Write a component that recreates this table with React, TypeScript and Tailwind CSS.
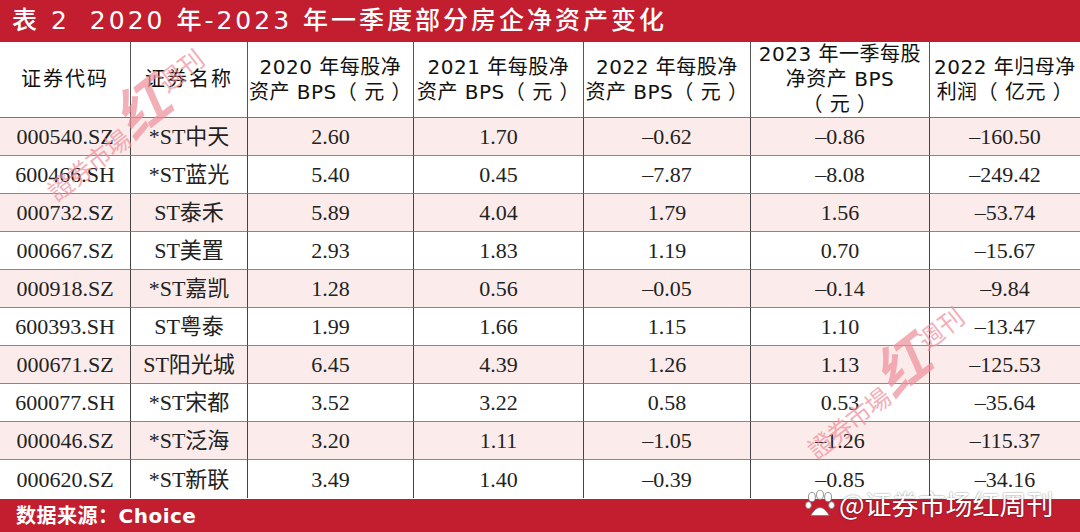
import React from 'react';

const ROWS = [
  ['000540.SZ', '*ST中天', '2.60', '1.70', '–0.62', '–0.86', '–160.50'],
  ['600466.SH', '*ST蓝光', '5.40', '0.45', '–7.87', '–8.08', '–249.42'],
  ['000732.SZ', 'ST泰禾', '5.89', '4.04', '1.79', '1.56', '–53.74'],
  ['000667.SZ', 'ST美置', '2.93', '1.83', '1.19', '0.70', '–15.67'],
  ['000918.SZ', '*ST嘉凯', '1.28', '0.56', '–0.05', '–0.14', '–9.84'],
  ['600393.SH', 'ST粤泰', '1.99', '1.66', '1.15', '1.10', '–13.47'],
  ['000671.SZ', 'ST阳光城', '6.45', '4.39', '1.26', '1.13', '–125.53'],
  ['600077.SH', '*ST宋都', '3.52', '3.22', '0.58', '0.53', '–35.64'],
  ['000046.SZ', '*ST泛海', '3.20', '1.11', '–1.05', '–1.26', '–115.37'],
  ['000620.SZ', '*ST新联', '3.49', '1.40', '–0.39', '–0.85', '–34.16'],
];

const HEADERS: React.ReactNode[] = [
  <span className="tracking-[2px]">证券代码</span>,
  <span className="tracking-[2px]">证券名称</span>,
  <>2020 年每股净<br />资产 BPS（ 元 ）</>,
  <>2021 年每股净<br />资产 BPS（ 元 ）</>,
  <>2022 年每股净<br />资产 BPS（ 元 ）</>,
  <>2023 年一季每股<br />净资产 BPS<br />（ 元 ）</>,
  <>2022 年归母净<br />利润（ 亿元 ）</>,
];

const sans = { fontFamily: '"DejaVu Sans", "Noto Sans CJK SC", sans-serif' };
const cjk = { fontFamily: '"Noto Sans CJK SC", "Noto Sans", sans-serif' };
const serif = { fontFamily: '"Liberation Serif", "Noto Sans CJK SC", serif' };

function Stamp({ className }: { className: string }) {
  return (
    <div className={`pointer-events-none absolute w-0 h-0 ${className}`}>
      <div
        className="absolute left-0 bottom-0 origin-bottom-left -rotate-[38deg] flex items-end whitespace-nowrap text-[#ef8e9b] opacity-70"
        style={cjk}
      >
        <span className="text-[25px] leading-none tracking-[-1px]">證券市場</span>
        <span className="text-[54px] italic font-bold leading-none mx-[2px]">红</span>
        <span className="text-[25px] leading-none mb-[18px]">週刊</span>
      </div>
    </div>
  );
}

export default function App() {
  return (
    <div className="relative w-[1080px] h-[532px] overflow-hidden bg-white">
      <div className="h-[42px] bg-[#c31d30] flex items-center pl-[12px] text-white text-[25px] font-medium tracking-[3px]" style={sans}>
        表 2<span className="ml-[20px]">2020 年-2023 年一季度部分房企净资产变化</span>
      </div>

      <div className="grid grid-cols-[130px_117px_166px_170px_167px_179px_151px]">
        {HEADERS.map((h, i) => (
          <div
            key={i}
            className={`h-[76px] flex items-center justify-center text-center text-[20px] leading-[25px] tracking-[0.5px] text-[#111] whitespace-nowrap border-b border-[#777] ${i > 0 ? 'border-l border-l-[#555]' : ''}`}
            style={sans}
          >
            <div>{h}</div>
          </div>
        ))}
        {ROWS.map((row, r) =>
          row.map((cell, c) => (
            <div
              key={`${r}-${c}`}
              className={`h-[38px] flex items-center justify-center text-[22px] text-[#222] border-b border-[#888] ${r % 2 === 0 ? 'bg-[#fbeceb]' : 'bg-white'} ${c > 0 ? 'border-l border-l-[#444]' : ''} ${r === ROWS.length - 1 ? 'border-b-0' : ''}`}
              style={serif}
            >
              {cell}
            </div>
          ))
        )}
      </div>

      <div className="absolute left-0 right-0 bottom-0 h-[33px] bg-[#c31d30] flex items-center pl-[16px] text-white text-[20px] font-bold tracking-[0.5px]" style={sans}>
        数据来源：Choice
      </div>

      <Stamp className="left-[58px] top-[204px]" />
      <Stamp className="left-[818px] top-[462px]" />

      <div className="absolute left-[805px] top-[484px] flex items-center gap-[4px] text-white text-[27px]" style={{ ...cjk, textShadow: '0 0 2px rgba(0,0,0,0.55)' }}>
        <svg width="30" height="28" viewBox="0 0 26 24" fill="white" stroke="#777" strokeWidth="0.7">
          <ellipse cx="6" cy="6" rx="3" ry="4" />
          <ellipse cx="13" cy="4" rx="3" ry="4" />
          <ellipse cx="20" cy="6" rx="3" ry="4" />
          <ellipse cx="3" cy="13" rx="2.5" ry="3" />
          <ellipse cx="23" cy="13" rx="2.5" ry="3" />
          <path d="M5 22 Q13 8 21 22 Z" />
        </svg>
        <span>@证券市场红周刊</span>
      </div>
    </div>
  );
}
